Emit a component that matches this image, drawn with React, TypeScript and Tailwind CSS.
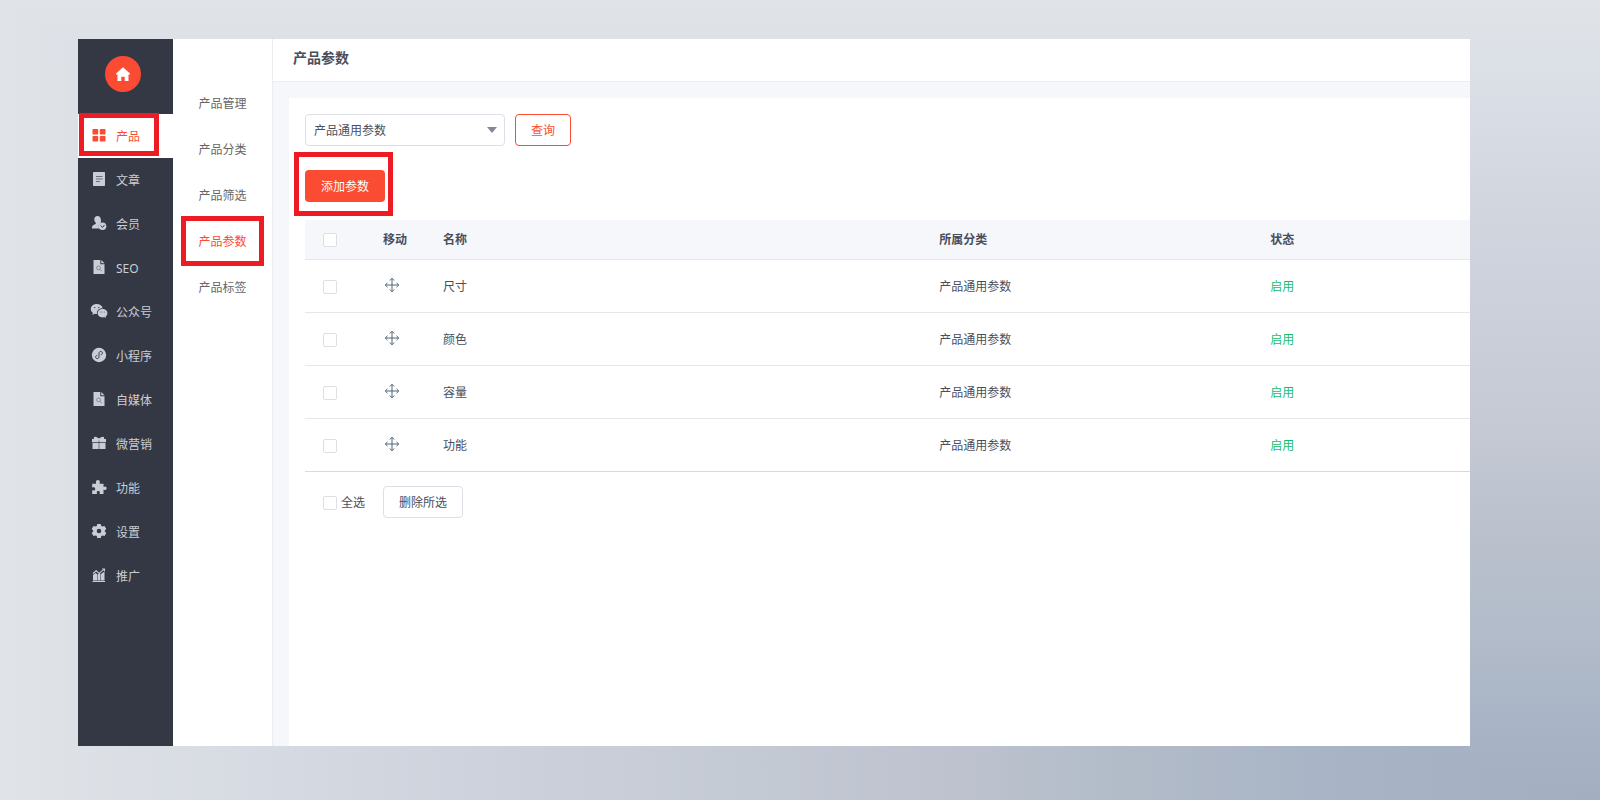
import { useState } from "react";
import type { ReactNode } from "react";

const Svg = ({ children, className = "" }: { children: ReactNode; className?: string }) => (
  <svg viewBox="0 0 16 16" className={`size-4 shrink-0 fill-current ${className}`} aria-hidden="true">
    {children}
  </svg>
);

const docSearch = (
  <Svg>
    <path d="M2.500 1h6.800v4.200h4.200V15H2.500z" />
    <path d="M10.300 1l3.200 3.200h-3.200z" />
    <g fill="none" stroke="#7d828c" strokeWidth="0.900">
      <circle cx="7.500" cy="8.900" r="1.900" />
      <path d="M9 10.400l1.900 1.700" />
    </g>
  </Svg>
);

const icons: Record<string, ReactNode> = {
  product: (
    <Svg>
      <rect x="1.500" y="2" width="5.700" height="5.500" rx="0.700" />
      <rect x="8.800" y="2" width="5.700" height="5.500" rx="0.700" />
      <rect x="1.500" y="9" width="5.700" height="5.500" rx="0.700" />
      <rect x="8.800" y="9" width="5.700" height="5.500" rx="0.700" />
    </Svg>
  ),
  article: (
    <Svg>
      <rect x="2" y="1" width="12" height="14" rx="0.800" />
      <path d="M5 5.500h6.500M5 8h6.500M5 10.500h4" fill="none" stroke="#6a6f7a" strokeWidth="1" />
    </Svg>
  ),
  member: (
    <Svg>
      <path d="M6.500 1C4.500 1 3.300 2.500 3.300 4.400c0 1.500.7 2.800 1.600 3.500v.9C3 9.700 1 10.400 1 12.500v1h7.300A4.300 4.300 0 0 1 9.700 8V7.500A4.300 4.300 0 0 0 9.800 4.400C9.800 2.500 8.500 1 6.500 1z" />
      <circle cx="11.500" cy="11.200" r="3.800" />
      <path d="M9.800 10.500l1.700 1.900 2-2.400" fill="none" stroke="#343844" strokeWidth="1" />
    </Svg>
  ),
  seo: docSearch,
  media: docSearch,
  wechat: (
    <svg viewBox="0 0 18 16" className="-mx-px h-4 w-[18px] shrink-0 fill-current" aria-hidden="true">
      <path d="M6.800 1C3.300 1 .8 3.200.8 6c0 1.600.8 2.900 2.100 3.800l-.6 2.200 2.300-1.200c.8.200 1.400.3 2.200.3h.2A5 5 0 0 1 6.900 10c0-2.700 2.600-4.700 5.800-4.700C12.300 2.900 9.800 1 6.800 1z" />
      <path d="M12.600 6c-2.800 0-4.900 1.900-4.900 4.200s2.100 4.200 4.900 4.200c.6 0 1.200-.1 1.700-.3l1.700 1.100-.4-1.700c1.100-.8 1.800-1.900 1.800-3.300C17.400 7.900 15.300 6 12.600 6z" />
      <g fill="#343844">
        <circle cx="4.800" cy="4.600" r="0.700" />
        <circle cx="8.800" cy="4.600" r="0.700" />
        <circle cx="11" cy="9" r="0.500" />
        <circle cx="14.200" cy="9" r="0.500" />
      </g>
    </svg>
  ),
  mini: (
    <Svg>
      <circle cx="8" cy="8" r="7.200" />
      <path
        d="M8 9.700c0 1.300-.9 1.900-1.800 1.900S4.600 10.900 4.600 10s.8-1.600 1.700-1.600M8 9.700V6.300c0-1.300.9-1.900 1.800-1.900s1.600.7 1.600 1.600-.8 1.600-1.700 1.600"
        fill="none"
        stroke="#343844"
        strokeWidth="1"
      />
    </Svg>
  ),
  gift: (
    <Svg>
      <path d="M1 4h2C2.200 2.400 3.800 1.400 5.300 2c1 .4 1.900 1 2.700 1.600.8-.6 1.700-1.200 2.700-1.600 1.500-.6 3.100.4 2.300 2H15v3.300H8.300V5.500h-.6v1.800H1z" />
      <path d="M1.500 8h6.200v6H1.500zM8.300 8h6.200v6H8.300z" />
    </Svg>
  ),
  puzzle: (
    <Svg>
      <path d="M5 4.700c.4-.6-.1-1-.1-1.900C4.900 1.700 5.800.9 6.900.9s2 .8 2 1.900c0 .9-.6 1.300-.2 1.900h3.800v3.100c.5.400 1-.2 1.600-.2.900 0 1.500.8 1.500 1.700s-.6 1.700-1.500 1.700c-.6 0-1.100-.6-1.600-.2V15H8.700c-.4-.5.200-.9.200-1.500 0-.8-.7-1.400-1.600-1.400s-1.600.6-1.600 1.400c0 .6.600 1 .2 1.500H1.200v-3.500c.3-.5.900 0 1.500 0 .9 0 1.500-.7 1.500-1.600s-.6-1.600-1.500-1.600c-.6 0-1.200.5-1.500 0V4.700z" />
    </Svg>
  ),
  gear: (
    <Svg>
      <path
        fillRule="evenodd"
        d="M6.200.9h3.600l.4 2 1.300.7 2-.6 1.800 3-1.500 1.400v1.200l1.500 1.400-1.800 3-2-.6-1.300.7-.4 2H6.200l-.4-2-1.300-.7-2 .6-1.800-3 1.500-1.400V7.400L.7 6l1.800-3 2 .6 1.300-.7zM8 5.700a2.300 2.300 0 1 0 0 4.600 2.300 2.300 0 0 0 0-4.600z"
      />
    </Svg>
  ),
  promo: (
    <Svg>
      <path d="M2 8l2.500-2 1.500 1v6.500H2zM6.500 7.500l2-1.500 1 1v6.500h-3zM10 7l3.500-2.500v9H10zM1.500 14h12.500v1H1.500z" />
      <path d="M2 6.500l3.200-2.700 3 2.500 4.500-4" fill="none" stroke="currentColor" strokeWidth="1.100" />
      <path d="M10.800 1.500h3.200v3.200z" />
    </Svg>
  ),
};

const nav: [string, string][] = [
  ["product", "产品"],
  ["article", "文章"],
  ["member", "会员"],
  ["seo", "SEO"],
  ["wechat", "公众号"],
  ["mini", "小程序"],
  ["media", "自媒体"],
  ["gift", "微营销"],
  ["puzzle", "功能"],
  ["gear", "设置"],
  ["promo", "推广"],
];

const subNav = ["产品管理", "产品分类", "产品筛选", "产品参数", "产品标签"];
const rows = ["尺寸", "颜色", "容量", "功能"];

function Highlight({ className }: { className: string }) {
  return <span aria-hidden="true" className={`pointer-events-none absolute z-10 border-5 border-[#ed1c24] ${className}`} />;
}

function Check({ label, checked, onChange }: { label: string; checked: boolean; onChange: () => void }) {
  return (
    <input
      type="checkbox"
      aria-label={label}
      checked={checked}
      onChange={onChange}
      className="block size-3.5 shrink-0 appearance-none rounded-[2px] border border-[#dcdfe6] bg-white checked:border-[#fb4b32] checked:bg-[#fb4b32]"
    />
  );
}

function MoveIcon() {
  return (
    <svg viewBox="0 0 16 16" className="size-4" fill="none" stroke="#4f6678" strokeWidth="1" aria-hidden="true">
      <path d="M8 1.500v13M1.500 8h13M5.800 3.500L8 1.200l2.200 2.300M5.800 12.500L8 14.800l2.200-2.300M3.500 5.800L1.200 8l2.300 2.200M12.500 5.800L14.800 8l-2.300 2.200" />
    </svg>
  );
}

export default function App() {
  const [picked, setPicked] = useState<string[]>([]);
  const all = picked.length === rows.length;
  const toggleAll = () => setPicked(all ? [] : rows);
  const toggle = (r: string) => setPicked((p) => (p.includes(r) ? p.filter((x) => x !== r) : [...p, r]));

  return (
    <div className="flex min-h-screen bg-[linear-gradient(to_right,#e0e4e8,#dbdfe5_8%,#d2d6df_23%,#cbcfda_35%,#c5cbd5_45%,#bdc2ce_60%,#b2bcc9_70%,#a9b4c6_82%,#a3afc0),linear-gradient(to_bottom,#e0e4e8,#dce0e7_8%,#d2d6df_25%,#cbcfda_41%,#c4c9d4_54%,#bbc1cd_66%,#b2bcca_79%,#a9b4c6_90%,#a3afc0)] pt-[39px] pr-[130px] pb-[54px] pl-[78px] font-['Noto_Sans','Noto_Sans_CJK_SC',sans-serif] text-xs text-[#4a4e5c] bg-blend-lighten">
      <div className="flex min-w-0 flex-1 bg-white">
        <nav aria-label="主导航" className="w-[95px] shrink-0 bg-[#343844]">
          <a href="#home" aria-label="首页" className="mt-[17px] mb-[22px] ml-[27px] flex size-9 items-center justify-center rounded-full bg-[#fb4b32] text-white">
            <Svg>
              <path d="M8 1.200L15 7.600v1h-1.500V15H9.700v-4.200H6.300V15H2.500V8.600H1v-1z" />
            </Svg>
          </a>
          <ul>
            {nav.map(([icon, label], i) => (
              <li key={label} className="relative">
                <a
                  href={`#${icon}`}
                  className={`flex h-11 items-center gap-[9px] pl-[13px] ${i === 0 ? "bg-white text-[#fb4b32]" : "text-[#c9ced6]"}`}
                >
                  <span className="pb-0.5">{icons[icon]}</span>
                  <span className="pt-0.5">{label}</span>
                </a>
                {i === 0 && <Highlight className="-top-px left-px h-[43px] w-20" />}
              </li>
            ))}
          </ul>
        </nav>

        <nav aria-label="产品" className="w-[100px] shrink-0 border-r border-[#ebedf0] pt-[41px]">
          <ul>
            {subNav.map((label, i) => (
              <li key={label} className="relative">
                <a href={`#sub-${i}`} className={`flex h-[46px] items-center justify-center pt-0.5 ${i === 3 ? "text-[#fb4b32]" : "text-[#666]"}`}>
                  {label}
                </a>
                {i === 3 && <Highlight className="-top-0.5 left-2 h-[50px] w-[83px]" />}
              </li>
            ))}
          </ul>
        </nav>

        <div className="flex min-w-0 flex-1 flex-col bg-[#f6f7fb]">
          <header className="h-[43px] border-b border-[#ebedf0] bg-white pt-2 pl-5">
            <h1 className="text-sm leading-[22px] font-bold">产品参数</h1>
          </header>
          <main className="mt-4 ml-4 flex-1 bg-white pt-4 pl-4">
            <form className="flex gap-2.5" onSubmit={(e) => e.preventDefault()}>
              <div className="relative">
                <select aria-label="参数分类" className="h-8 w-[200px] appearance-none rounded border border-[#dcdfe6] bg-white px-2 pt-0.5">
                  <option>产品通用参数</option>
                </select>
                <svg viewBox="0 0 10 6" className="pointer-events-none absolute top-[13px] right-2 h-1.5 w-2.5 fill-[#838894]" aria-hidden="true">
                  <path d="M0 0h10L5 6z" />
                </svg>
              </div>
              <button type="submit" className="h-8 w-14 rounded border border-[#fb4b32] pt-0.5 text-[#fb4b32]">
                查询
              </button>
            </form>
            <div className="relative mt-6 inline-block align-top">
              <button type="button" className="block h-8 w-20 rounded bg-[#fb4b32] pt-0.5 text-white">
                添加参数
              </button>
              <Highlight className="-top-[18px] -left-[11px] h-16 w-[99px]" />
            </div>
            <table className="mt-[18px] w-full table-fixed border-collapse text-left">
              <thead>
                <tr className="h-[39px] border-b border-[#e6e7ea] bg-[#f6f7fb]">
                  <th className="w-[78px] pt-0.5 pl-[18px]">
                    <Check label="全部选择" checked={all} onChange={toggleAll} />
                  </th>
                  <th className="w-[60px] pt-0.5 font-bold">移动</th>
                  <th className="w-[42.600%] pt-0.5 font-bold">名称</th>
                  <th className="w-[28.400%] pt-0.5 font-bold">所属分类</th>
                  <th className="pt-0.5 font-bold">状态</th>
                </tr>
              </thead>
              <tbody>
                {rows.map((r) => (
                  <tr key={r} className="h-[53px] border-b border-[#e6e7ea] last:border-[#d8dade]">
                    <td className="pt-0.5 pl-[18px]">
                      <Check label={r} checked={picked.includes(r)} onChange={() => toggle(r)} />
                    </td>
                    <td>
                      <button type="button" aria-label={`移动 ${r}`} className="mb-0.5 block px-px">
                        <MoveIcon />
                      </button>
                    </td>
                    <td className="pt-0.5">{r}</td>
                    <td className="pt-0.5">产品通用参数</td>
                    <td className="pt-0.5 text-[#19be6b]">启用</td>
                  </tr>
                ))}
              </tbody>
            </table>
            <div className="mt-3.5 flex items-center pl-[18px]">
              <label className="flex w-[60px] items-center gap-1 pt-0.5">
                <Check label="全选" checked={all} onChange={toggleAll} />
                全选
              </label>
              <button type="button" className="h-8 w-20 rounded border border-[#dcdfe6] pt-0.5">
                删除所选
              </button>
            </div>
          </main>
        </div>
      </div>
    </div>
  );
}
